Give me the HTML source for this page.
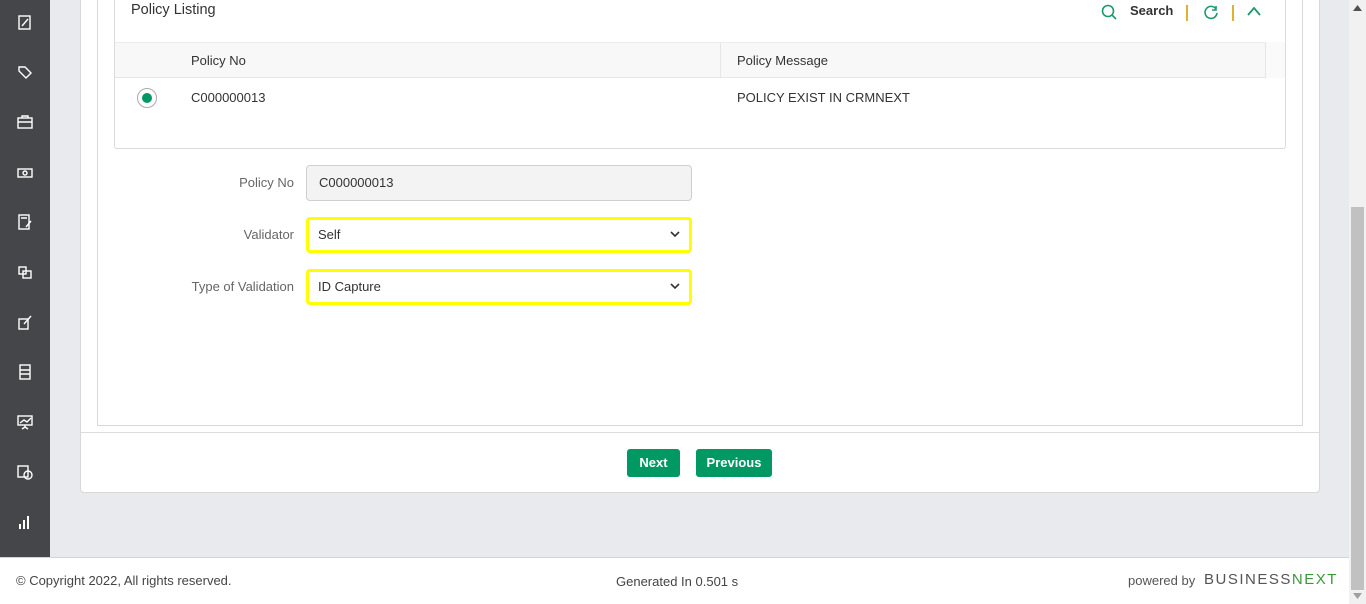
<!DOCTYPE html>
<html><head><meta charset="utf-8"><style>
*{box-sizing:border-box;margin:0;padding:0}
body{width:1366px;height:604px;overflow:hidden;background:#e9eaee;font-family:"Liberation Sans",sans-serif;font-size:13px;color:#333;position:relative}
.abs{position:absolute}
.side{left:0;top:0;width:50px;height:557px;background:#45464a}
.side svg{position:absolute;left:17px;width:16px;height:16px}
.card{left:80px;top:-10px;width:1240px;height:503px;background:#fff;border:1px solid #d8d8d8;border-radius:4px}
.panel{left:97px;top:-10px;width:1206px;height:436px;background:#fff;border:1px solid #d8d8d8}
.list{left:114px;top:-10px;width:1172px;height:159px;border:1px solid #dcdcdc;border-radius:3px;background:#fff}
.lbl{color:#666;font-size:13px;text-align:right;width:120px;left:174px}
.inp{left:306px;width:386px;height:36px;border-radius:4px;padding-left:12px;line-height:34px;font-size:13px;color:#333}
.btn{top:449px;height:28px;background:#009863;color:#fff;font-weight:bold;font-size:13px;line-height:28px;text-align:center;border-radius:3px}
.foot{left:0;top:557px;width:1349px;height:47px;background:#fff;border-top:1px solid #d4d4d4}
</style></head><body>
<div class="abs side">
<svg style="top:14px" viewBox="0 0 16 16" fill="none" stroke="#fff" stroke-width="1.4"><rect x="2" y="2" width="11" height="13"/><path d="M5 12l6-7"/></svg>
<svg style="top:64px" viewBox="0 0 16 16" fill="none" stroke="#fff" stroke-width="1.4"><path d="M2 3h6l6 6-5 5-7-7z"/></svg>
<svg style="top:114px" viewBox="0 0 16 16" fill="none" stroke="#fff" stroke-width="1.4"><rect x="1" y="4" width="14" height="10"/><path d="M5 4V2h6v2M1 8h14"/></svg>
<svg style="top:164px" viewBox="0 0 16 16" fill="none" stroke="#fff" stroke-width="1.4"><rect x="1" y="5" width="14" height="8"/><circle cx="8" cy="9" r="2"/></svg>
<svg style="top:214px" viewBox="0 0 16 16" fill="none" stroke="#fff" stroke-width="1.4"><rect x="2" y="1" width="10" height="14"/><path d="M4 4h6M9 13l5-6"/></svg>
<svg style="top:264px" viewBox="0 0 16 16" fill="none" stroke="#fff" stroke-width="1.4"><rect x="2" y="3" width="7" height="7"/><rect x="6" y="7" width="8" height="7"/></svg>
<svg style="top:314px" viewBox="0 0 16 16" fill="none" stroke="#fff" stroke-width="1.4"><rect x="2" y="5" width="9" height="10"/><path d="M7 10l7-8"/></svg>
<svg style="top:364px" viewBox="0 0 16 16" fill="none" stroke="#fff" stroke-width="1.4"><rect x="3" y="1" width="10" height="14"/><path d="M3 6h10M3 10h10"/></svg>
<svg style="top:414px" viewBox="0 0 16 16" fill="none" stroke="#fff" stroke-width="1.4"><rect x="1" y="2" width="14" height="9"/><path d="M3 9l4-3 3 2 4-4M8 11v3M5 15l3-2 3 2"/></svg>
<svg style="top:464px" viewBox="0 0 16 16" fill="none" stroke="#fff" stroke-width="1.4"><rect x="1" y="2" width="10" height="11"/><circle cx="11" cy="11" r="4"/></svg>
<svg style="top:514px" viewBox="0 0 16 16" fill="#fff"><rect x="2" y="10" width="2" height="5"/><rect x="6" y="6" width="2" height="9"/><rect x="10" y="2" width="2" height="13"/></svg>
</div>
<div class="abs card"></div>
<div class="abs panel"></div>
<div class="abs list"></div>
<div class="abs" style="left:131px;top:2px;font-size:14.5px;color:#333">Policy Listing</div>
<svg class="abs" style="left:1101px;top:4px" width="16" height="16" viewBox="0 0 16 16" fill="none" stroke="#1a9a6a" stroke-width="1.6"><circle cx="7" cy="7" r="5.5"/><path d="M11 11l4 4"/></svg>
<div class="abs" style="left:1130px;top:3px;font-weight:600;font-size:13px;color:#333">Search</div>
<div class="abs" style="left:1186px;top:5px;width:1.5px;height:16px;background:#e0b030"></div>
<svg class="abs" style="left:1203px;top:4px" width="16" height="16" viewBox="0 0 16 16" fill="none" stroke="#1a9a6a" stroke-width="1.6"><path d="M13 5A6 6 0 1 0 14 9"/><path d="M13 2v4h-4"/></svg>
<div class="abs" style="left:1232px;top:5px;width:1.5px;height:16px;background:#e0b030"></div>
<svg class="abs" style="left:1246px;top:5px" width="16" height="12" viewBox="0 0 16 12" fill="none" stroke="#1a9a6a" stroke-width="1.8"><path d="M2 10l6-7 6 7"/></svg>
<div class="abs" style="left:115px;top:42px;width:1151px;height:36px;background:#f8f8f8;border-top:1px solid #ececec;border-bottom:1px solid #e6e6e6;border-right:1px solid #e6e6e6"></div>
<div class="abs" style="left:1266px;top:42px;width:19px;height:36px;background:#fafafa"></div>
<div class="abs" style="left:720px;top:42px;width:1px;height:36px;background:#e6e6e6"></div>
<div class="abs" style="left:191px;top:53px">Policy No</div>
<div class="abs" style="left:737px;top:53px">Policy Message</div>
<div class="abs" style="left:137px;top:88px;width:20px;height:20px;border:1px solid #aaa;border-radius:50%"></div>
<div class="abs" style="left:142px;top:93px;width:10px;height:10px;background:#009863;border-radius:50%"></div>
<div class="abs" style="left:191px;top:90px">C000000013</div>
<div class="abs" style="left:737px;top:90px">POLICY EXIST IN CRMNEXT</div>
<div class="abs lbl" style="top:175px">Policy No</div>
<div class="abs inp" style="top:165px;background:#f3f3f3;border:1px solid #cfcfcf">C000000013</div>
<div class="abs lbl" style="top:227px">Validator</div>
<div class="abs inp" style="top:217px;border:3.5px solid #ffff00;background:#fff;line-height:29px;padding-left:9px">Self<svg style="position:absolute;right:9px;top:11px" width="10" height="7" viewBox="0 0 10 7" fill="none" stroke="#333" stroke-width="1.6"><path d="M1 1l4 4 4-4"/></svg></div>
<div class="abs lbl" style="top:279px">Type of Validation</div>
<div class="abs inp" style="top:269px;border:3.5px solid #ffff00;background:#fff;line-height:29px;padding-left:9px">ID Capture<svg style="position:absolute;right:9px;top:11px" width="10" height="7" viewBox="0 0 10 7" fill="none" stroke="#333" stroke-width="1.6"><path d="M1 1l4 4 4-4"/></svg></div>
<div class="abs" style="left:81px;top:432px;width:1238px;height:1px;background:#dcdcdc"></div>
<div class="abs btn" style="left:627px;width:53px">Next</div>
<div class="abs btn" style="left:696px;width:76px">Previous</div>
<div class="abs foot"></div>
<div class="abs" style="left:16px;top:573px;color:#444">© Copyright 2022, All rights reserved.</div>
<div class="abs" style="left:616px;top:574px;color:#444">Generated In 0.501 s</div>
<div class="abs" style="left:1128px;top:573px;color:#555">powered by</div>
<div class="abs" style="left:1204px;top:571px;font-size:15px;letter-spacing:1.5px;color:#555">BUSINESS<span style="color:#3a9a3a">NEXT</span></div>
<div class="abs" style="left:1349px;top:0;width:17px;height:604px;background:#f1f1f1"></div>
<div class="abs" style="left:1351px;top:207px;width:13px;height:383px;background:#c1c1c1"></div>
<svg class="abs" style="left:1353px;top:5px" width="9" height="6" viewBox="0 0 9 6"><path d="M0 6L4.5 0 9 6z" fill="#505050"/></svg>
<svg class="abs" style="left:1353px;top:593px" width="9" height="6" viewBox="0 0 9 6"><path d="M0 0L4.5 6 9 0z" fill="#a0a0a0"/></svg>
</body></html>
